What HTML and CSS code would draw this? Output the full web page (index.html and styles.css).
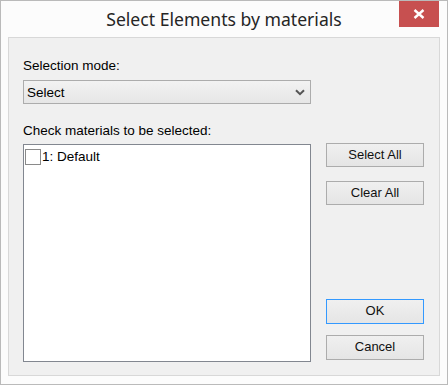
FILE: index.html
```html
<!DOCTYPE html>
<html lang="en">
<head>
  <meta charset="UTF-8">
  <title>Select Elements by materials</title>
  <link rel="stylesheet" href="styles.css">
</head>
<body>
  <div class="window">
    <div class="titlebar">
      <span class="title">Select Elements by materials</span>
      <div class="close-btn">
        <svg width="12" height="10" viewBox="0 0 12 10">
          <path d="M1.5 1 L10.5 9 M10.5 1 L1.5 9" stroke="#fff" stroke-width="2.4" fill="none"/>
        </svg>
      </div>
    </div>

    <div class="client">
      <div class="label">Selection mode:</div>
      <div class="combo">
        <span>Select</span>
        <svg class="chevron" width="10" height="7" viewBox="0 0 10 7">
          <path d="M1 1.2 L5 5.2 L9 1.2" stroke="#555" stroke-width="2" fill="none"/>
        </svg>
      </div>

      <div class="materials">
        <div class="label label-list">Check materials to be selected:</div>
        <div class="listbox">
          <div class="list-item">
            <span class="checkbox"></span>
            <span>1: Default</span>
          </div>
        </div>
        <div class="buttons">
          <div class="btn">Select All</div>
          <div class="btn btn-gap">Clear All</div>
          <div class="btn btn-default">OK</div>
          <div class="btn btn-cancel">Cancel</div>
        </div>
      </div>
    </div>
  </div>
</body>
</html>
```

FILE: styles.css
```css
html, body {
  margin: 0;
  padding: 0;
}

body {
  width: 448px;
  height: 385px;
  font-family: "Liberation Sans", Arial, sans-serif;
  color: #000;
}

.window {
  position: relative;
  box-sizing: border-box;
  width: 448px;
  height: 385px;
  border: 1px solid #bababa;
  background: #fcfcfc;
  display: flex;
  flex-direction: column;
}

.titlebar {
  height: 36px;
  text-align: center;
  flex-shrink: 0;
}

.title {
  display: inline-block;
  font-family: "Noto Sans", "Open Sans", sans-serif;
  font-size: 17.6px;
  line-height: 24px;
  padding-top: 6px;
  color: #252525;
}

.close-btn {
  position: absolute;
  top: 0;
  right: 8px;
  width: 40px;
  height: 26px;
  background: #c75050;
  display: flex;
  align-items: center;
  justify-content: center;
}

.client {
  flex: 1;
  margin: 0 7px 8px 7px;
  border: 1px solid #d8d8d8;
  background: #f0f0f0;
  padding: 20px 14px 13px 14px;
  display: flex;
  flex-direction: column;
}

.label {
  font-size: 13.5px;
  line-height: 16px;
  color: #000;
}

.combo {
  box-sizing: border-box;
  width: 288px;
  height: 24px;
  margin-top: 6px;
  border: 1px solid #acacac;
  background: linear-gradient(#f2f2f2, #e6e6e6);
  display: flex;
  align-items: center;
  justify-content: space-between;
  padding: 0 5px 0 3px;
  font-size: 13.5px;
}

.materials {
  flex: 1;
  margin-top: 19px;
  display: grid;
  grid-template-columns: 288px 98px;
  grid-template-rows: auto 1fr;
  column-gap: 15px;
  row-gap: 5px;
}

.label-list {
  grid-column: 1 / 3;
}

.listbox {
  border: 1px solid #828790;
  background: #fff;
}

.list-item {
  display: flex;
  align-items: flex-start;
  padding: 4px 0 0 1px;
  font-size: 13.5px;
  line-height: 16px;
}

.checkbox {
  box-sizing: border-box;
  width: 16px;
  height: 16px;
  border: 1px solid #8a8a8a;
  background: #fff;
  margin-right: 1px;
}

.buttons {
  display: flex;
  flex-direction: column;
  margin-top: -1px;
  padding-bottom: 2px;
}

.btn {
  box-sizing: border-box;
  height: 24px;
  border: 1px solid #acacac;
  background: linear-gradient(#f0f0f0, #e5e5e5);
  font-size: 13px;
  line-height: 22px;
  text-align: center;
  color: #111;
}

.btn-gap {
  margin-top: 14px;
}

.btn-default {
  margin-top: auto;
  height: 25px;
  border-color: #3399ff;
}

.btn-cancel {
  margin-top: 11px;
  height: 25px;
}
```
